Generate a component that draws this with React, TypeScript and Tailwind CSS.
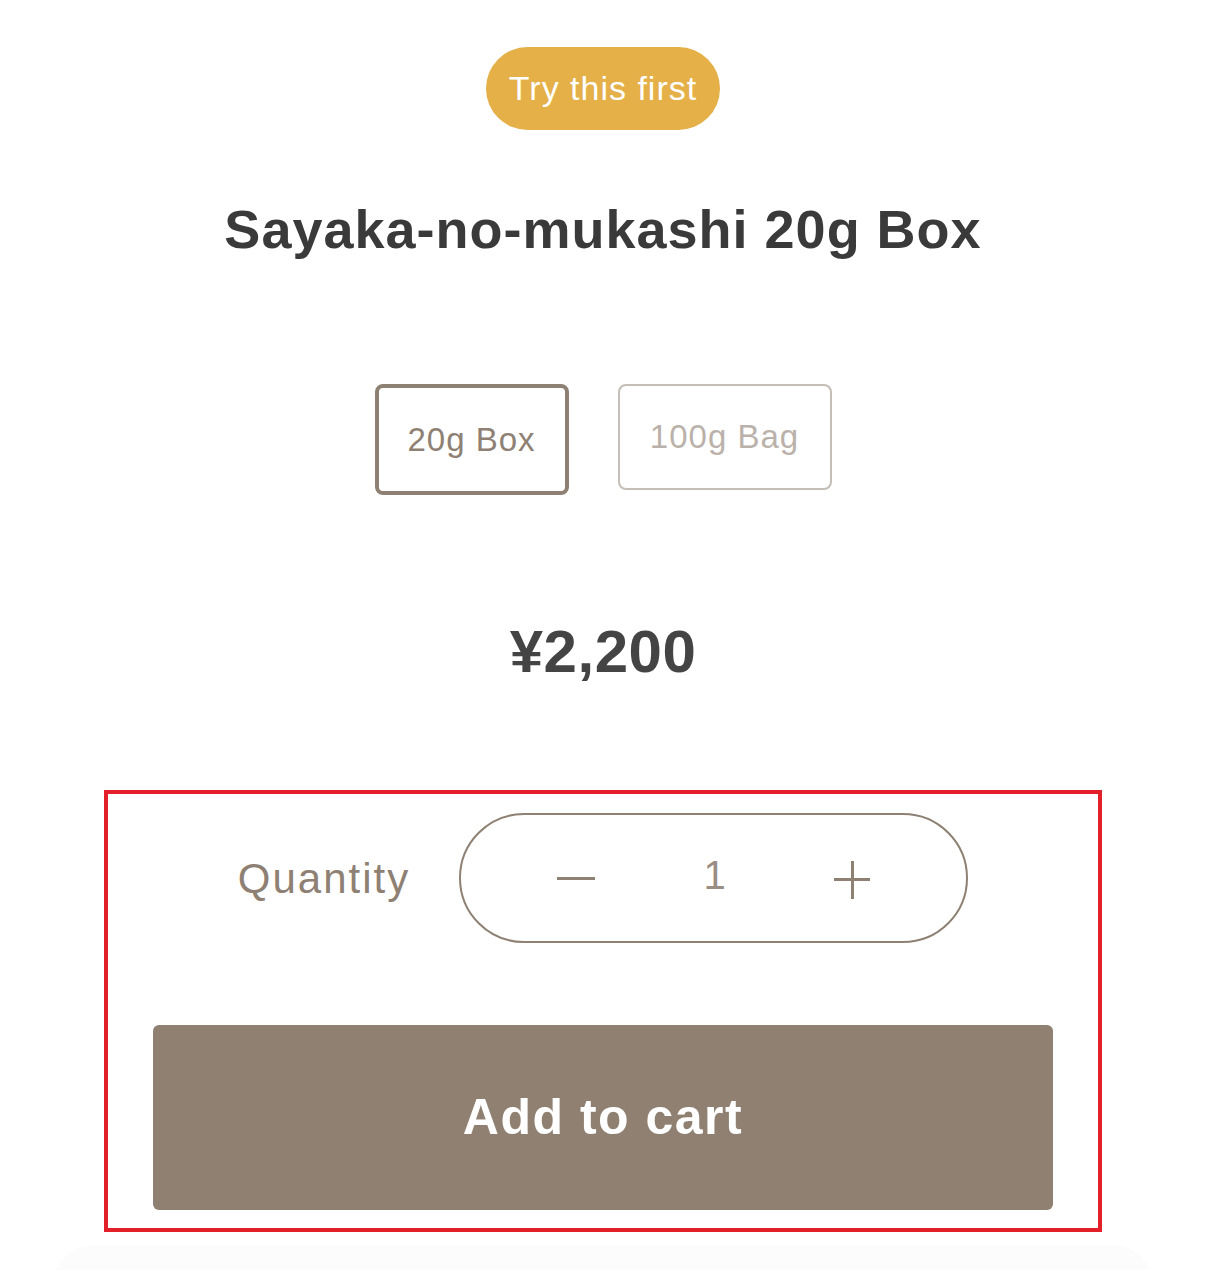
import { useState } from "react";

const sizes = ["20g Box", "100g Bag"];

export default function App() {
  const [selected, setSelected] = useState(0);
  const [qty, setQty] = useState(1);

  return (
    <div className="min-h-[1270px] bg-white flex flex-col items-center font-['Liberation_Sans',Arial,sans-serif]">
      <div className="mt-[47px] h-[83px] px-[23px] rounded-full bg-[#e4b047] text-white text-[34px] tracking-[1px] flex items-center">
        Try this first
      </div>

      <h1 className="mt-[72px] text-[54px] leading-none font-bold tracking-[1px] text-[#3a3a3a]">
        Sayaka-no-mukashi 20g Box
      </h1>

      <div className="mt-[128px] flex items-start gap-[49px]">
        {sizes.map((s, i) =>
          selected === i ? (
            <button
              key={s}
              onClick={() => setSelected(i)}
              className="w-[194px] h-[111px] rounded-[8px] border-[4px] border-[#8e8073] text-[33px] tracking-[1px] text-[#8e8073] flex items-center justify-center"
            >
              {s}
            </button>
          ) : (
            <button
              key={s}
              onClick={() => setSelected(i)}
              className="w-[214px] h-[106px] rounded-[8px] border-2 border-[#c5beb6] text-[33px] tracking-[1px] text-[#bab2aa] flex items-center justify-center"
            >
              {s}
            </button>
          )
        )}
      </div>

      <div className="mt-[127px] text-[60px] leading-none font-bold tracking-[0.5px] text-[#444444]">¥2,200</div>

      <div className="mt-[108px] w-[998px] border-[4px] border-[#e3202a] pt-[19px] pb-[18px] flex flex-col items-center">
        <div className="flex items-center justify-center gap-[49px]">
          <span className="text-[42px] tracking-[2px] text-[#8e8073]">Quantity</span>
          <div className="w-[509px] h-[130px] rounded-full border-2 border-[#8e8073] px-[96px] flex items-center justify-between">
            <button onClick={() => setQty(Math.max(1, qty - 1))} className="w-[38px] h-[36px] flex items-center">
              <span className="block w-[38px] h-[3px] bg-[#8e8073]" />
            </button>
            <span className="text-[40px] leading-none text-[#9a8e84] -mt-[6px]">{qty}</span>
            <button onClick={() => setQty(qty + 1)} className="relative w-[36px] h-[38px] mt-[4px]">
              <span className="absolute left-0 top-[17px] w-[36px] h-[3px] bg-[#8e8073]" />
              <span className="absolute left-[16.5px] top-0 w-[3px] h-[38px] bg-[#8e8073]" />
            </button>
          </div>
        </div>

        <button className="mt-[82px] w-[900px] h-[185px] rounded-[6px] bg-[#8f8072] text-white text-[50px] font-bold tracking-[1.5px]">
          Add to cart
        </button>
      </div>

      <div className="mt-[13px] w-[1100px] h-[40px] rounded-t-[120px] bg-[#fcfcfc]" />
    </div>
  );
}
